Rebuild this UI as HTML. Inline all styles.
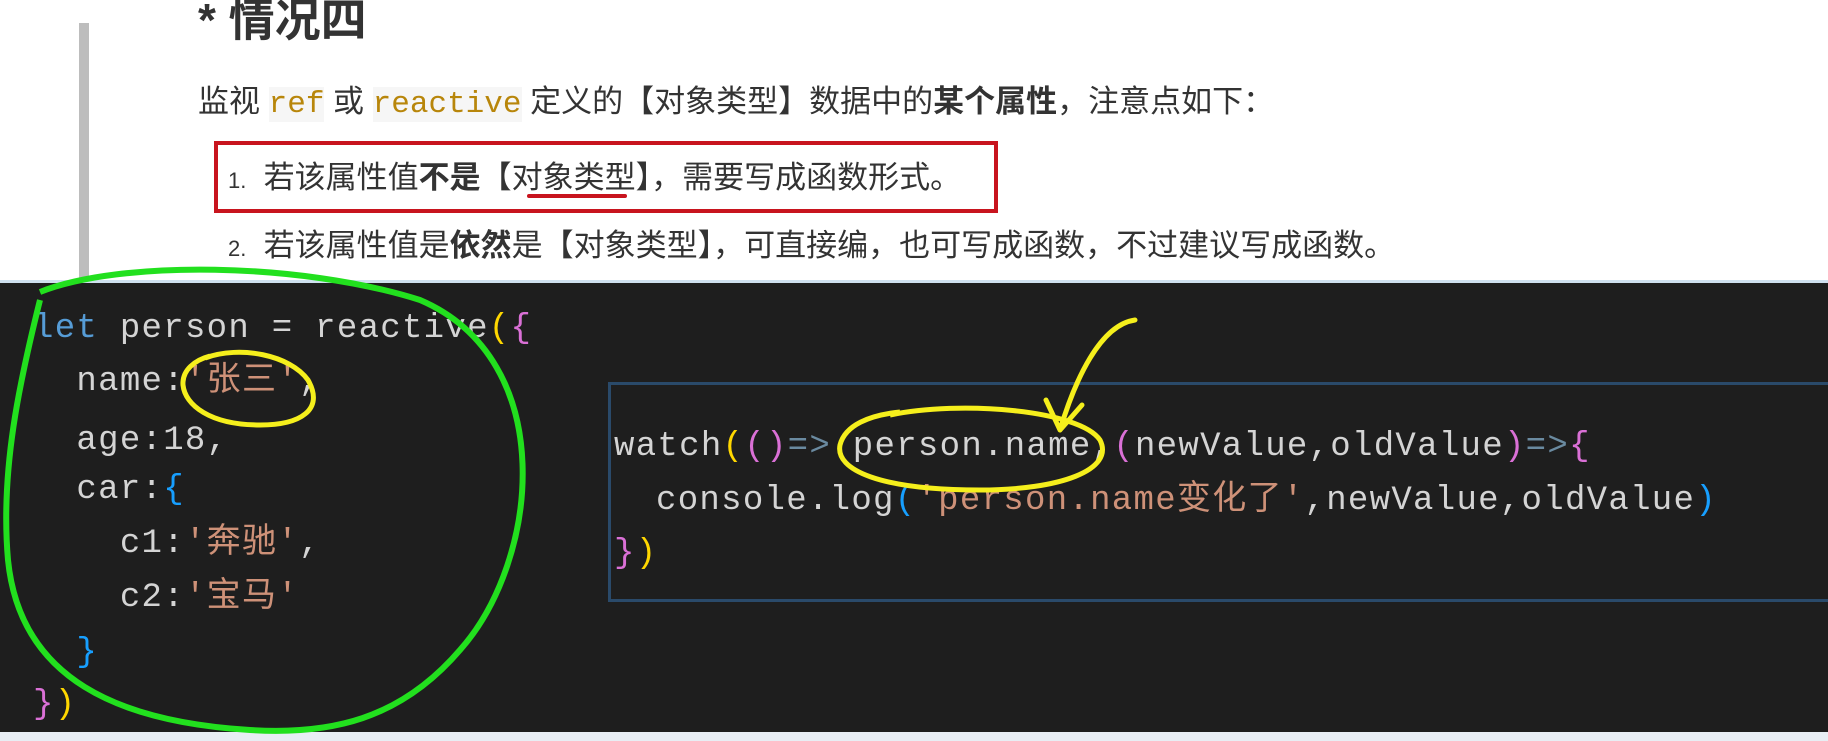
<!DOCTYPE html>
<html><head><meta charset="utf-8"><style>
body{margin:0;width:1828px;height:741px;overflow:hidden;background:#fff;position:relative;font-family:"Liberation Sans","Noto Sans CJK SC",sans-serif;}
.abs{position:absolute;white-space:pre;}
.bar{position:absolute;left:79px;top:23px;width:10px;height:260px;background:#bdbdbd;}
.t{color:#333;}
.c{font-family:"Liberation Mono","Noto Sans CJK SC",monospace;color:#b8860b;background:#f6f6f6;}
.code{position:absolute;left:0;top:280px;width:1828px;height:452px;background:#1e1e1e;border-top:3px solid #cfe0ef;box-sizing:border-box;}
.m{font-family:"Liberation Mono","Noto Sans CJK SC",monospace;font-size:34px;line-height:54px;height:54px;letter-spacing:1.3px;color:#d4d4d4;position:absolute;white-space:pre;}
.k{color:#569cd6}.s{color:#ce9178}.y{color:#ffd700}.p{color:#da70d6}.b{color:#179fff}.o{color:#6a8aa0}
.inner{position:absolute;left:608px;top:382px;width:1230px;height:220px;border:3px solid #2a4a6a;border-right:none;box-sizing:border-box;}
</style></head><body>
<div class="bar"></div>
<div class="abs t" style="left:198px;top:-10px;font-size:46px;font-weight:bold;line-height:60px;">* 情况四</div>
<div class="abs t" style="left:198px;top:82px;font-size:31px;line-height:40px;">监视 <span class="c">ref</span> 或 <span class="c">reactive</span> 定义的【对象类型】数据中的<b>某个属性</b>，注意点如下：</div>
<div class="abs" style="left:214px;top:141px;width:784px;height:72px;border:4px solid #c8141e;box-sizing:border-box;"></div>
<div class="abs t" style="left:228px;top:158px;font-size:31px;line-height:40px;"><span style="font-size:22px">1.</span>  若该属性值<b>不是</b>【对象类型】，需要写成函数形式。</div>
<div class="abs" style="left:527px;top:194px;width:100px;height:4px;background:#c8141e;border-radius:2px;"></div>
<div class="abs t" style="left:228px;top:226px;font-size:31px;line-height:40px;"><span style="font-size:22px">2.</span>  若该属性值是<b>依然</b>是【对象类型】，可直接编，也可写成函数，不过建议写成函数。</div>
<div class="code"></div>
<div class="abs" style="left:0;top:732px;width:1828px;height:9px;background:#e8eef4;"></div>
<div class="inner"></div>
<div class="m" style="left:33px;top:302px;"><span class="k">let</span> person = reactive<span class="y">(</span><span class="p">{</span></div>
<div class="m" style="left:33px;top:355px;">  name:<span class="s">'张三'</span>,</div>
<div class="m" style="left:33px;top:414px;">  age:18,</div>
<div class="m" style="left:33px;top:463px;">  car:<span class="b">{</span></div>
<div class="m" style="left:33px;top:517px;">    c1:<span class="s">'奔驰'</span>,</div>
<div class="m" style="left:33px;top:571px;">    c2:<span class="s">'宝马'</span></div>
<div class="m" style="left:33px;top:626px;">  <span class="b">}</span></div>
<div class="m" style="left:33px;top:678px;"><span class="p">}</span><span class="y">)</span></div>
<div class="m" style="left:614px;top:420px;">watch<span class="y">(</span><span class="p">()</span><span class="o">=&gt;</span> person.name,<span class="p">(</span>newValue,oldValue<span class="p">)</span><span class="o">=&gt;</span><span class="p">{</span></div>
<div class="m" style="left:656px;top:474px;">console.log<span class="b">(</span><span class="s">'person.name变化了'</span>,newValue,oldValue<span class="b">)</span></div>
<div class="m" style="left:614px;top:527px;"><span class="p">}</span><span class="y">)</span></div>
<svg width="1828" height="741" style="position:absolute;left:0;top:0" fill="none">
<path d="M40 292 C120 260 300 262 420 300 C560 360 540 560 460 650 C400 720 330 735 250 730 C120 722 20 680 8 560 C0 470 20 380 40 300" stroke="#22e01e" stroke-width="6"/>
<path d="M205 358 C240 345 290 355 308 380 C325 410 300 425 260 425 C210 425 185 405 183 385 C182 370 195 360 210 356" stroke="#f5ef1c" stroke-width="5"/>
<path d="M890 415 C960 400 1080 410 1100 440 C1115 470 1060 490 980 490 C880 490 835 470 840 445 C845 425 870 415 900 412" stroke="#f5ef1c" stroke-width="5"/>
<path d="M1135 320 C1100 325 1075 380 1060 430 M1060 430 L1046 400 M1060 430 L1082 405" stroke="#f5ef1c" stroke-width="5" stroke-linecap="round"/>
</svg>
</body></html>
